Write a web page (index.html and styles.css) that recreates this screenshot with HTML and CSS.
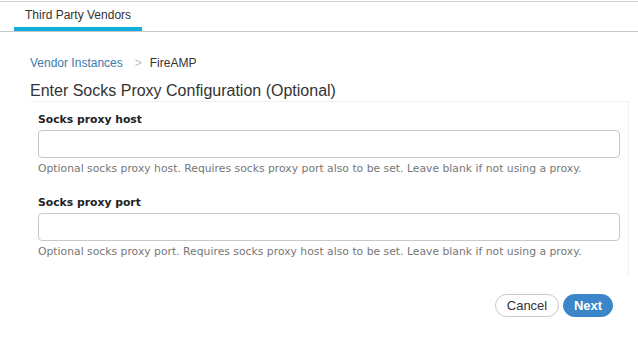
FILE: index.html
```html
<!DOCTYPE html>
<html lang="en">
<head>
    <meta charset="UTF-8">
    <title>Third Party Vendors - FireAMP</title>
    <link rel="stylesheet" href="styles.css">
</head>
<body>
    <div class="tabs">
        <div class="tab active">Third Party Vendors</div>
    </div>

    <div class="page">
        <div class="breadcrumb">
            <a class="crumb-link" href="#">Vendor Instances</a>
            <span class="crumb-sep">&gt;</span>
            <span class="crumb-current">FireAMP</span>
        </div>
        <h2 class="page-title">Enter Socks Proxy Configuration (Optional)</h2>

        <div class="panel">
            <div class="field">
                <label for="proxyHost">Socks proxy host</label>
                <input type="text" id="proxyHost" name="proxyHost">
                <div class="help">Optional socks proxy host. Requires socks proxy port also to be set. Leave blank if not using a proxy.</div>
            </div>
            <div class="field">
                <label for="proxyPort">Socks proxy port</label>
                <input type="text" id="proxyPort" name="proxyPort">
                <div class="help">Optional socks proxy port. Requires socks proxy host also to be set. Leave blank if not using a proxy.</div>
            </div>
        </div>

        <div class="actions">
            <button class="btn btn-cancel">Cancel</button>
            <button class="btn btn-next">Next</button>
        </div>
    </div>
</body>
</html>
```

FILE: styles.css
```css
body {
    margin: 0;
    padding: 0;
    background-color: #fff;
    font-family: 'Liberation Sans', Arial, sans-serif;
    color: #333;
}
.tabs {
    margin-top: 1px;
    border-top: 1px solid #d4d4d8;
    border-bottom: 1px solid #c6c6c6;
    padding-left: 14px;
    display: flex;
}
.tab {
    font-size: 12px;
    color: #333;
    padding: 6px 11px 0;
    height: 19px;
    border-bottom: 4px solid #fff;
}
.tab.active {
    border-bottom-color: #12aedc;
}
.page {
    padding: 24px 9px 0 30px;
}
.breadcrumb {
    font-size: 12px;
    line-height: 14px;
    display: flex;
}
.crumb-link {
    color: #3d7aab;
    text-decoration: none;
}
.crumb-sep {
    color: #bbb;
    margin: 0 8px 0 12px;
}
.crumb-current {
    color: #333;
}
.page-title {
    margin: 12px 0 0;
    font-size: 16px;
    line-height: 18px;
    font-weight: normal;
    color: #333;
}
.panel {
    margin-top: 1px;
    border-top: 1px solid #f1f1f1;
    border-right: 1px solid #f1f1f1;
    padding: 10px 8px 16px 8px;
}
.field {
    margin-bottom: 19px;
}
.field:last-child {
    margin-bottom: 0;
}
.field label {
    display: block;
    font-family: 'DejaVu Sans', Verdana, sans-serif;
    font-size: 10.8px;
    font-weight: bold;
    color: #222;
    line-height: 14px;
    padding-top: 1px;
    margin-bottom: 3px;
}
.field input {
    display: block;
    box-sizing: border-box;
    width: 100%;
    height: 28px;
    border: 1px solid #c8c8c8;
    border-radius: 4px;
    padding: 0 8px;
    margin: 0;
}
.help {
    font-family: 'DejaVu Sans', Verdana, sans-serif;
    font-size: 10.8px;
    line-height: 14px;
    color: #777;
    margin-top: 4px;
}
.actions {
    display: flex;
    justify-content: flex-end;
    gap: 4px;
    margin-top: 19px;
    padding-right: 16px;
}
.btn {
    font-family: 'Liberation Sans', Arial, sans-serif;
    font-size: 13px;
    height: 23px;
    border-radius: 12px;
    cursor: pointer;
    padding: 0;
}
.btn-cancel {
    width: 64px;
    background-color: #fff;
    color: #333;
    border: 1px solid #c8c8c8;
}
.btn-next {
    width: 50px;
    background-color: #3a86c8;
    color: #fff;
    font-weight: bold;
    border: 1px solid #3a86c8;
}
```
